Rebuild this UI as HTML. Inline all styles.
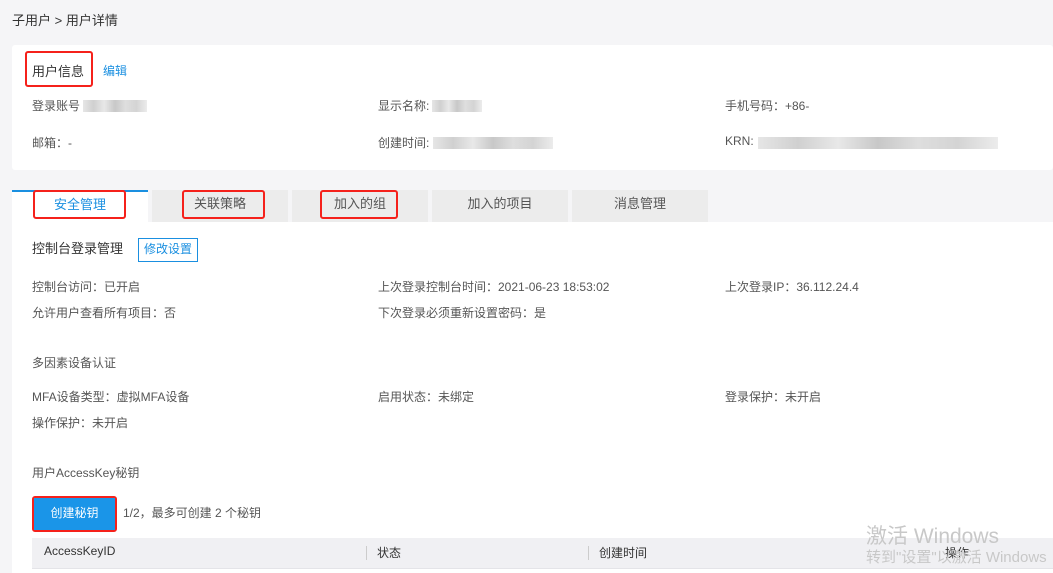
<!DOCTYPE html>
<html><head><meta charset="utf-8"><style>
*{margin:0;padding:0;box-sizing:border-box}
body{width:1053px;height:573px;overflow:hidden;background:#f5f5f7;font-family:"Liberation Sans","Noto Sans CJK SC",sans-serif;color:#555;font-size:12px;position:relative}
.a{position:absolute;white-space:nowrap}
.t{margin-top:-2px}
.card{position:absolute;background:#fff}
.red{position:absolute;border:2px solid #f5211b;border-radius:3px}
.blur{position:absolute;height:12px;background:linear-gradient(90deg,#e6e6e6,#d0d0d0,#e8e8e8,#c8c8c8,#dedede,#d4d4d4,#ececec)}
.tab{position:absolute;top:190px;height:32px;width:136px;background:#ececec;text-align:center;line-height:28px;font-size:13px;color:#555}
</style></head><body>
<div class="a" style="left:12px;top:10px;font-size:13px;color:#333">子用户 &gt; 用户详情</div>

<div class="card" style="left:12px;top:45px;width:1041px;height:125px;border-radius:3px"></div>
<div class="red" style="left:25px;top:51px;width:68px;height:36px"></div>
<div class="a" style="left:32px;top:61px;font-size:13px;color:#333">用户信息</div>
<div class="a" style="left:103px;top:62px;color:#1a8fe0">编辑</div>
<div class="a" style="left:32px;top:97px">登录账号</div>
<div class="blur" style="left:83px;top:100px;width:64px"></div>
<div class="a" style="left:378px;top:97px">显示名称:</div>
<div class="blur" style="left:432px;top:100px;width:50px"></div>
<div class="a" style="left:725px;top:97px">手机号码：+86-</div>
<div class="a" style="left:32px;top:134px">邮箱：-</div>
<div class="a" style="left:378px;top:134px">创建时间:</div>
<div class="blur" style="left:433px;top:137px;width:120px"></div>
<div class="a" style="left:725px;top:134px">KRN:</div>
<div class="blur" style="left:758px;top:137px;width:240px"></div>

<div class="tab" style="left:12px;background:#fff;border-top:2px solid #1a8fe0;color:#1a8fe0;line-height:26px">安全管理</div>
<div class="tab" style="left:152px">关联策略</div>
<div class="tab" style="left:292px">加入的组</div>
<div class="tab" style="left:432px">加入的项目</div>
<div class="tab" style="left:572px">消息管理</div>
<div class="red" style="left:33px;top:190px;width:93px;height:29px"></div>
<div class="red" style="left:182px;top:190px;width:83px;height:29px"></div>
<div class="red" style="left:320px;top:190px;width:78px;height:29px"></div>

<div class="card" style="left:12px;top:222px;width:1041px;height:351px"></div>
<div class="a" style="left:32px;top:238px;font-size:13px;color:#333">控制台登录管理</div>
<div class="a" style="left:138px;top:238px;border:1px solid #1a8fe0;color:#1a8fe0;padding:0 5px;height:24px;line-height:21px">修改设置</div>
<div class="a" style="left:32px;top:278px">控制台访问：已开启</div>
<div class="a" style="left:378px;top:278px">上次登录控制台时间：2021-06-23 18:53:02</div>
<div class="a" style="left:725px;top:278px">上次登录IP：36.112.24.4</div>
<div class="a" style="left:32px;top:304px">允许用户查看所有项目：否</div>
<div class="a" style="left:378px;top:304px">下次登录必须重新设置密码：是</div>
<div class="a" style="left:32px;top:354px">多因素设备认证</div>
<div class="a" style="left:32px;top:388px">MFA设备类型：虚拟MFA设备</div>
<div class="a" style="left:378px;top:388px">启用状态：未绑定</div>
<div class="a" style="left:725px;top:388px">登录保护：未开启</div>
<div class="a" style="left:32px;top:414px">操作保护：未开启</div>
<div class="a" style="left:32px;top:464px">用户AccessKey秘钥</div>
<div class="red" style="left:32px;top:496px;width:85px;height:36px"></div>
<div class="a" style="left:34px;top:498px;width:81px;height:32px;background:#1a95e8;color:#fff;text-align:center;line-height:30px">创建秘钥</div>
<div class="a" style="left:123px;top:504px">1/2，最多可创建 2 个秘钥</div>
<div class="a" style="left:32px;top:538px;width:1021px;height:31px;background:#f0f0f3;border-bottom:1px solid #e4e4e8"></div>
<div class="a" style="left:44px;top:544px;color:#333">AccessKeyID</div>
<div class="a" style="left:366px;top:546px;width:1px;height:14px;background:#ccc"></div>
<div class="a" style="left:377px;top:544px;color:#333">状态</div>
<div class="a" style="left:588px;top:546px;width:1px;height:14px;background:#ccc"></div>
<div class="a" style="left:599px;top:544px;color:#333">创建时间</div>
<div class="a" style="left:945px;top:544px;color:#333">操作</div>
<div class="a" style="left:866px;top:520px;font-size:21px;color:#c8c8c8">激活 Windows</div>
<div class="a" style="left:866px;top:546px;font-size:15px;color:#c8c8c8">转到"设置"以激活 Windows</div>
</body></html>
